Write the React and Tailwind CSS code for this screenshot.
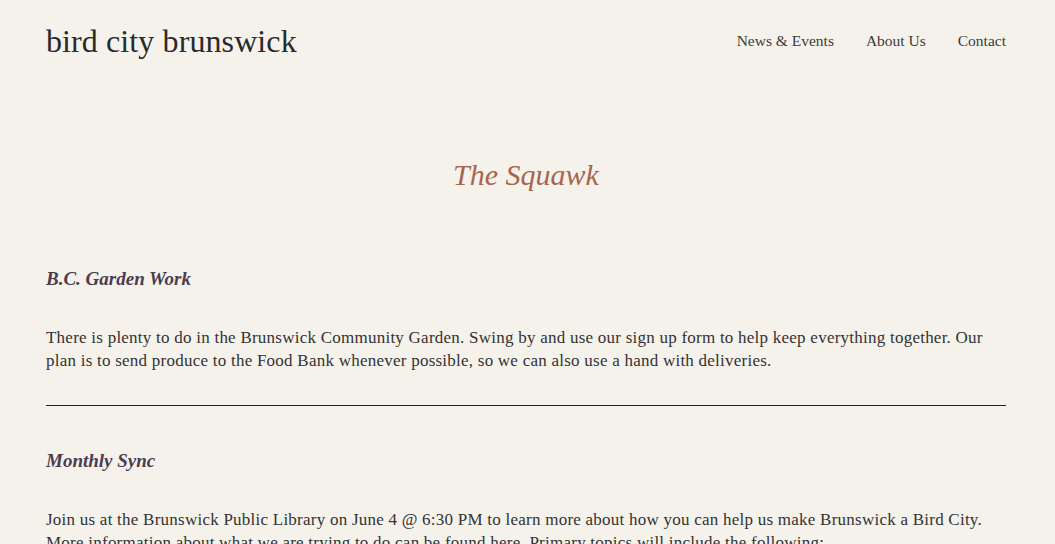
const serif = { fontFamily: '"Liberation Serif", "DejaVu Serif", serif' };

const posts = [
  {
    title: 'B.C. Garden Work',
    body: 'There is plenty to do in the Brunswick Community Garden. Swing by and use our sign up form to help keep everything together. Our plan is to send produce to the Food Bank whenever possible, so we can also use a hand with deliveries.',
  },
  {
    title: 'Monthly Sync',
    body: 'Join us at the Brunswick Public Library on June 4 @ 6:30 PM to learn more about how you can help us make Brunswick a Bird City. More information about what we are trying to do can be found here. Primary topics will include the following:',
  },
];

const App = () => {
  return (
    <div className="min-h-screen bg-[#f5f2ec] text-[#333]" style={serif}>
      <div className="pl-[46px] pr-[49px]">
        <header className="flex items-start justify-between pt-[23px]">
          <h1 className="text-[32px] leading-[36px] tracking-[0.1px] text-[#2a2a2a]">bird city brunswick</h1>
          <nav className="flex gap-[32px] mt-[8px] text-[15.5px] leading-[20px] text-[#3b3b3b]">
            <a href="#">News &amp; Events</a>
            <a href="#">About Us</a>
            <a href="#">Contact</a>
          </nav>
        </header>

        <h2 className="text-center italic text-[30px] leading-[30px] text-[#a9654b] mt-[101px]">The Squawk</h2>

        <main className="mt-[77px]">
          {posts.map((post, i) => (
            <article key={post.title}>
              {i > 0 && <hr className="border-t border-[#222] mt-[33px] mb-[43px]" />}
              <h3 className="italic font-semibold text-[19px] leading-[24px] text-[#4b3d50]">{post.title}</h3>
              <p className="mt-[35px] text-[17px] leading-[23px] tracking-[0.24px]">{post.body}</p>
            </article>
          ))}
        </main>
      </div>
    </div>
  );
};

export default App;
